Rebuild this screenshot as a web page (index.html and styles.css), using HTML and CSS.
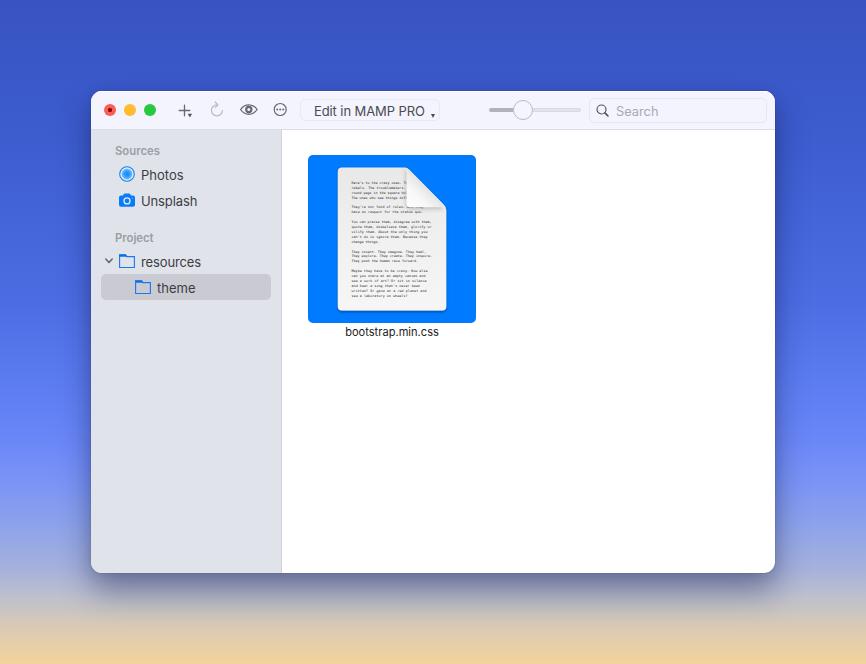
FILE: index.html
```
<!DOCTYPE html>
<html lang="en">
<head>
<meta charset="utf-8">
<title>Media browser</title>
<link rel="stylesheet" href="styles.css">
</head>
<body>
<main class="window">
  <header class="toolbar">
    <div class="lights"><i class="light red"></i><i class="light yellow"></i><i class="light green"></i></div>
    <svg class="tools" width="112" height="20" viewBox="0 0 112 20" fill="none" stroke="#69696f" stroke-width="1.35" stroke-linecap="round" stroke-linejoin="round">
      <path d="M2.2 10.500h10.600M7.500 5.200v10.600"/>
      <path d="M10.700 13.800h4.400l-2.200 3.800z" fill="#55555a" stroke="none"/>
      <path d="M40 4.900a5.500 5.500 0 1 0 5.400 5.400M38.200 2l2.800 2.900-2.800 2.800" stroke="#bbbbc3" stroke-width="1.200"/>
      <path d="M63.600 9.500c4.200-6.300 12.300-6.300 16.500 0c-4.200 6.300-12.300 6.300-16.500 0z" stroke-width="1.300"/>
      <circle cx="71.800" cy="9.500" r="2.600" stroke-width="2.200"/>
      <circle cx="103.200" cy="9.500" r="6" stroke-width="1.200"/>
      <g fill="#69696f" stroke="none"><circle cx="100.200" cy="9.500" r="1"/><circle cx="103.200" cy="9.500" r="1"/><circle cx="106.200" cy="9.500" r="1"/></g>
    </svg>
    <div class="edit"><span>Edit in MAMP PRO</span><i class="caret"></i></div>
    <div class="slider"><i class="fill"></i><i class="knob"></i><i class="rest"></i></div>
    <div class="search">
      <svg width="14" height="14" viewBox="0 0 14 14" fill="none" stroke="#55555a" stroke-width="1.200" stroke-linecap="round"><circle cx="5.500" cy="6.500" r="4.500"/><path d="M8.900 9.900l3 3" stroke-width="1.600"/></svg>
      <span>Search</span>
    </div>
  </header>
  <div class="body">
    <nav class="sidebar">
      <h2 class="sources">Sources</h2>
      <div class="row">
        <svg class="icon" width="16" height="16" viewBox="0 0 16 16"><defs><radialGradient id="glow"><stop offset="0" stop-color="#078cff"/><stop offset=".5" stop-color="#2b9bfb"/><stop offset="1" stop-color="#8bc4f7"/></radialGradient></defs><circle cx="8" cy="8" r="7.300" fill="#dbe8f6" stroke="#1681ef" stroke-width="1.100"/><circle cx="8" cy="8" r="5.300" fill="url(#glow)"/><circle cx="8" cy="8" r="4.600" fill="none" stroke="#43a3f5" stroke-width=".8" stroke-dasharray="1 .8"/></svg>
        <span>Photos</span>
      </div>
      <div class="row">
        <svg class="icon" width="16" height="16" viewBox="0 0 16 16"><g transform="translate(0 .6)"><path d="M2 2.800h2l.8-1.300q.3-.5.9-.5h4.600q.6 0 .9.500L12 2.800h2q2 0 2 2v7.400q0 2-2 2H2q-2 0-2-2V4.800q0-2 2-2z" fill="#087bf9"/><circle cx="8" cy="8.300" r="3" fill="none" stroke="#e0ebfa" stroke-width="1.300"/><circle cx="13.300" cy="5.500" r=".6" fill="#8fc3fb"/></g></svg>
        <span class="narrow">Unsplash</span>
      </div>
      <h2 class="project">Project</h2>
      <div class="row">
        <svg class="chevron" width="8" height="6" viewBox="0 0 8 6" fill="none" stroke="#606167" stroke-width="1.400" stroke-linecap="round" stroke-linejoin="round"><path d="M.8 1l3.200 3.500L7.200 1"/></svg>
        <svg class="icon" width="16" height="16" viewBox="0 0 16 16"><g transform="translate(0 .6)"><path d="M.6 3V1.300h6l1.200 1.700h7.600v10.900H.6z" fill="none" stroke="#1979ed" stroke-width="1.100"/><path d="M.1.900h6.800l1.400 2.300H.1z" fill="#0870e8"/></g></svg>
        <span class="narrow">resources</span>
      </div>
      <div class="row selected">
        <svg class="icon" width="16" height="16" viewBox="0 0 16 16"><g transform="translate(0 .6)"><path d="M.6 3V1.300h6l1.200 1.700h7.600v10.900H.6z" fill="none" stroke="#1979ed" stroke-width="1.100"/><path d="M.1.900h6.800l1.400 2.300H.1z" fill="#0870e8"/></g></svg>
        <span>theme</span>
      </div>
    </nav>
    <section class="content">
      <figure class="file">
        <svg class="thumb" width="168" height="168" viewBox="0 0 168 168">
          <defs>
            <linearGradient id="paper" x2="0" y2="1"><stop offset="0" stop-color="#e8e8e8"/><stop offset=".4" stop-color="#efefef"/><stop offset="1" stop-color="#f6f6f6"/></linearGradient>
            <linearGradient id="fold" x1="98" y1="53" x2="119" y2="32" gradientUnits="userSpaceOnUse"><stop offset="0" stop-color="#fff"/><stop offset=".55" stop-color="#f8f8f8"/><stop offset="1" stop-color="#e3e3e3"/></linearGradient>
            <filter id="drop" x="-20%" y="-20%" width="140%" height="140%"><feDropShadow dx="0" dy="1.500" stdDeviation="1.200" flood-color="#002c70" flood-opacity=".6"/></filter>
            <filter id="soft" x="-30%" y="-30%" width="160%" height="160%"><feGaussianBlur stdDeviation="2.200"/></filter>
            <clipPath id="sheet"><path d="M34 12.500H96q3 0 5 2L136 50q2.300 2.300 2.300 5v96.500q0 4-4 4H33.800q-4 0-4-4v-135q0-4 4.200-4z"/></clipPath>
          </defs>
          <path d="M34 12.500H96q3 0 5 2L136 50q2.300 2.300 2.300 5v96.500q0 4-4 4H33.800q-4 0-4-4v-135q0-4 4.200-4z" fill="url(#paper)" filter="url(#drop)"/>
          <g class="letter">
            <text x="43.500" y="28.900" textLength="62">Here's to the crazy ones. The m</text>
            <text x="43.500" y="33.800" textLength="54">rebels. The troublemakers. </text>
            <text x="43.500" y="38.700" textLength="56">round pegs in the square hol</text>
            <text x="43.500" y="43.600" textLength="60">The ones who see things differ</text>
            <text x="43.500" y="53.400" textLength="72">They're not fond of rules. And they</text>
            <text x="43.500" y="58.300" textLength="71.500">have no respect for the status quo.</text>
            <text x="43.500" y="68.100" textLength="80">You can praise them, disagree with them,</text>
            <text x="43.500" y="73" textLength="80">quote them, disbelieve them, glorify or</text>
            <text x="43.500" y="77.900" textLength="76">vilify them. About the only thing you</text>
            <text x="43.500" y="82.800" textLength="76">can't do is ignore them. Because they</text>
            <text x="43.500" y="87.700" textLength="28">change things.</text>
            <text x="43.500" y="97.500" textLength="74.500">They invent. They imagine. They heal.</text>
            <text x="43.500" y="102.400" textLength="80.500">They explore. They create. They inspire.</text>
            <text x="43.500" y="107.300" textLength="66.500">They push the human race forward.</text>
            <text x="43.500" y="117.100" textLength="76">Maybe they have to be crazy. How else</text>
            <text x="43.500" y="122" textLength="74">can you stare at an empty canvas and</text>
            <text x="43.500" y="126.900" textLength="75">see a work of art? Or sit in silence</text>
            <text x="43.500" y="131.800" textLength="68.500">and hear a song that's never been</text>
            <text x="43.500" y="136.700" textLength="75">written? Or gaze at a red planet and</text>
            <text x="43.500" y="141.600" textLength="56">see a laboratory on wheels?</text>
          </g>
          <g clip-path="url(#sheet)"><path d="M98 13v36q0 5 5 5h33z" fill="#555" opacity=".32" filter="url(#soft)"/></g>
          <path d="M96.500 12.500q2.500 0 4.500 2L136 50l2.300 4q-2-1.700-5-1.700H102q-3.500 0-3.500-3.500V16.500q0-2.500-2-4z" fill="url(#fold)"/>
        </svg>
        <figcaption>bootstrap.min.css</figcaption>
      </figure>
    </section>
  </div>
</main>
</body>
</html>
```
FILE: styles.css
```
* { box-sizing: border-box; }
html, body { height: 100%; }
body {
  margin: 0;
  padding: 91px;
  overflow: hidden;
  font-family: Inter, "Liberation Sans", sans-serif;
  color: #3c3d42;
  background: linear-gradient(180deg, #3854c1 0, #3c5bcd 125px, #4363d8 210px, #4c6ce3 300px, #5a7af0 375px, #6a87f8 440px, #7b95f6 485px, #90a4e9 530px, #a5b1dc 568px, #c0c1cb 600px, #dccbb2 630px, #f3d39b 664px);
}
.window {
  width: 684px;
  height: 482px;
  border-radius: 11px;
  background: #fff;
  overflow: hidden;
  display: flex;
  flex-direction: column;
  box-shadow: 0 0 1px rgba(0, 0, 0, .5), 0 18px 32px rgba(10, 20, 60, .4), 0 2px 14px rgba(10, 20, 60, .1);
}
.toolbar {
  height: 39px;
  flex: none;
  display: flex;
  align-items: center;
  background: #f3f4fd;
  border-bottom: 1px solid #dcdde5;
  box-shadow: inset 0 1px #fff;
}
.lights { display: flex; gap: 8px; margin-left: 13px; }
.light { width: 12px; height: 12px; border-radius: 50%; }
.red { background: radial-gradient(circle, #8b0a08 0 1.8px, #fa5e57 2.5px); }
.yellow { background: #febc2e; }
.green { background: #28c840; }
.tools { margin-left: 21px; }
.edit {
  width: 140px;
  height: 22px;
  margin-left: 11px;
  padding-left: 13px;
  border: 1px solid #e8e9f2;
  border-radius: 5px;
  display: flex;
  align-items: center;
  font-size: 13px;
  line-height: 22px;
  color: #4b4b51;
  white-space: nowrap;
}
.edit span { width: 117px; padding-top: 2px; letter-spacing: -.1px; }
.caret { border: 2.500px solid transparent; border-top: 4px solid #4b4b51; border-bottom: 0; margin-top: 11px; }
.slider { width: 92px; height: 20px; margin-left: 49px; display: flex; align-items: center; }
.fill { width: 24px; height: 4px; border-radius: 2px 0 0 2px; background: #b2b2bb; }
.knob { width: 20px; height: 20px; border: 1px solid #b9b9c2; border-radius: 50%; background: #f5f5fe; }
.rest { flex: 1; height: 4px; border: 1px solid #d8d8e1; border-radius: 0 2px 2px 0; background: #e3e3ec; }
.search {
  width: 178px;
  height: 25px;
  margin-left: 8px;
  padding-left: 6px;
  border: 1px solid #e6e7f0;
  border-radius: 5px;
  display: flex;
  align-items: center;
  gap: 6px;
  font-size: 12.8px;
  color: #a9a9b1;
}
.search span { padding-top: 2px; }
.body { flex: 1; display: flex; }
.sidebar {
  width: 191px;
  padding: 11px 10px;
  background: #e0e3ea;
  border-right: 1px solid #cfd2dc;
}
.sidebar h2 { margin: 0; padding-left: 14px; height: 20px; font-size: 11.3px; line-height: 20px; font-weight: 600; color: #9b9da5; }
.sidebar .project { margin-top: 15px; }
.row { position: relative; height: 26px; display: flex; align-items: center; padding-left: 18px; gap: 6px; font-size: 13px; border-radius: 5px; }
.row span { padding-top: 1px; }
.row .narrow { letter-spacing: -.12px; }
.selected { padding-left: 34px; background: #cacad3; }
.chevron { position: absolute; left: 4px; top: 10px; }
.content { flex: 1; padding: 25px 26px; }
.file { width: 168px; margin: 0; text-align: center; }
.thumb { display: block; border-radius: 5px; background: #007aff; }
.letter { font-family: "DejaVu Sans Mono", monospace; font-size: 3.35px; fill: #222; }
.file figcaption { margin-top: 1px; font-size: 11.1px; line-height: 16px; color: #222; white-space: nowrap; }
```
